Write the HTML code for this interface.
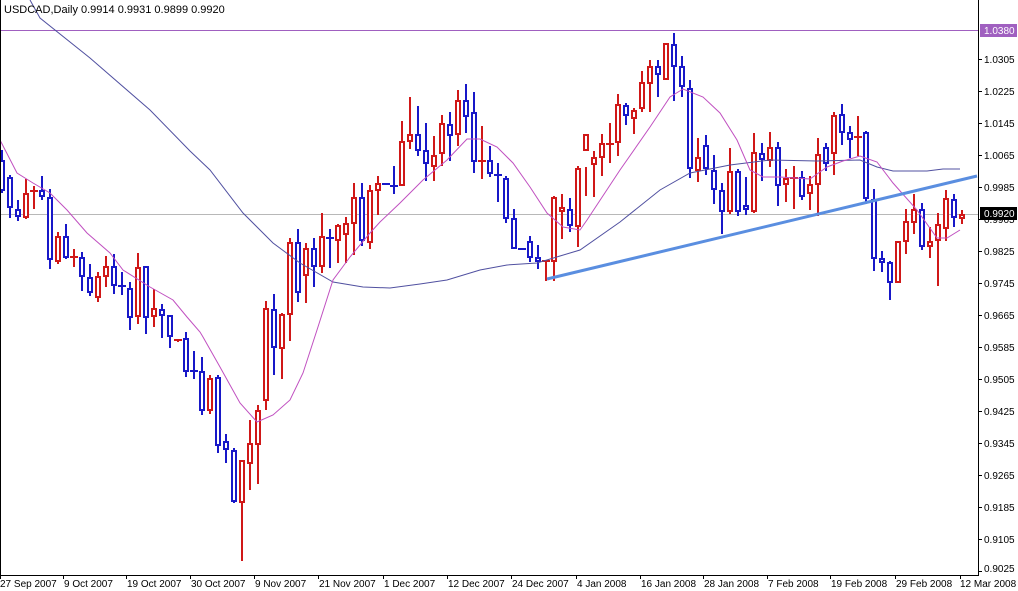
<!DOCTYPE html>
<html><head><meta charset="utf-8"><style>
html,body{margin:0;padding:0;background:#fff;width:1018px;height:591px;overflow:hidden}
svg{display:block}
text{font-family:"Liberation Sans",sans-serif;font-size:10px;fill:#000}
</style></head><body>
<svg id="s" width="1018" height="591" viewBox="0 0 1018 591" shape-rendering="crispEdges">
<rect width="1018" height="591" fill="#fff"/>
<line x1="0" y1="214.5" x2="978" y2="214.5" stroke="#b8b8b8"/>
<line x1="0" y1="30.5" x2="978" y2="30.5" stroke="#a060c0"/>
<g id="c"></g>
<polyline fill="none" stroke="#5050a0" stroke-width="1" shape-rendering="auto" points="30,0 40,18 90,58 150,110 190,151 210,170 243,213 273,243 300,263 333,282 363,287 390,288 420,284 447,280 480,270 507,265 537,263 560,256 580,250 620,222 660,190 690,173 730,165 770,160 817,161 860,160 877,167 893,171 927,171 943,169 960,169"/>
<polyline fill="none" stroke="#c050c0" stroke-width="1" shape-rendering="auto" points="0,140 17,173 33,183 50,193 67,210 87,233 110,253 123,270 150,287 173,300 187,317 200,332 203,337 220,367 240,403 257,422 273,415 290,400 303,373 317,330 333,280 350,257 370,233 380,222 400,203 423,180 447,160 467,139 480,139 497,147 513,163 530,187 547,213 563,227 580,230 587,220 620,170 650,127 670,97 683,89 703,97 720,113 737,140 750,170 763,177 780,177 810,179 827,167 843,161 860,156 877,162 893,183 917,210 937,238 947,238 960,230"/>
<line x1="547" y1="279" x2="977" y2="176" stroke="#5a8ee0" stroke-width="3" shape-rendering="auto"/>
<line x1="0.5" y1="0" x2="0.5" y2="575" stroke="#000"/>
<line x1="978.5" y1="0" x2="978.5" y2="575" stroke="#000"/>
<line x1="0" y1="575.5" x2="979" y2="575.5" stroke="#000"/>
<g id="ax"></g>
<text x="4" y="13" style="font-size:11px">USDCAD,Daily  0.9914 0.9931 0.9899 0.9920</text>
<rect x="980" y="24" width="37" height="13" fill="#a060c0"/>
<text x="984" y="34" style="fill:#fff">1.0380</text>
<text x="984" y="63">1.0305</text><text x="984" y="95">1.0225</text><text x="984" y="127">1.0145</text>
<text x="984" y="159">1.0065</text><text x="984" y="191">0.9985</text><text x="984" y="223">0.9905</text>
<text x="984" y="255">0.9825</text><text x="984" y="287">0.9745</text><text x="984" y="319">0.9665</text>
<text x="984" y="351">0.9585</text><text x="984" y="383">0.9505</text><text x="984" y="415">0.9425</text>
<text x="984" y="447">0.9345</text><text x="984" y="479">0.9265</text><text x="984" y="511">0.9185</text>
<text x="984" y="543">0.9105</text><text x="984" y="572">0.9025</text>
<rect x="980" y="207" width="37" height="13" fill="#000"/>
<text x="984" y="217" style="fill:#fff">0.9920</text>
<text x="0" y="587">27 Sep 2007</text><text x="64" y="587">9 Oct 2007</text><text x="127" y="587">19 Oct 2007</text>
<text x="191" y="587">30 Oct 2007</text><text x="255" y="587">9 Nov 2007</text><text x="319" y="587">21 Nov 2007</text>
<text x="384" y="587">1 Dec 2007</text><text x="448" y="587">12 Dec 2007</text><text x="512" y="587">24 Dec 2007</text>
<text x="577" y="587">4 Jan 2008</text><text x="641" y="587">16 Jan 2008</text><text x="704" y="587">28 Jan 2008</text>
<text x="768" y="587">7 Feb 2008</text><text x="831" y="587">19 Feb 2008</text><text x="896" y="587">29 Feb 2008</text>
<text x="960" y="587">12 Mar 2008</text>
</svg>
<script>
var d=[[150,160,190,192,'b'],[175,177,207,217,'b'],[200,209,216,220,'b'],[179,217,193,218,'r'],[186,193,190,208,'r'],[176,190,196,199,'b'],[189,197,259,268,'b'],[232,261,236,263,'r'],[224,236,257,258,'b'],[249,257,256,266,'r'],[252,257,276,290,'b'],[264,277,292,295,'b'],[272,297,276,301,'r'],[256,276,266,286,'r'],[254,266,285,293,'b'],[272,285,288,294,'b'],[282,288,317,329,'b'],[253,316,267,323,'r'],[266,266,317,333,'b'],[289,316,308,326,'r'],[304,309,315,337,'b'],[315,315,336,347,'b'],[339,341,339,341,'r'],[332,338,371,376,'b'],[351,370,371,378,'b'],[357,371,410,414,'b'],[375,410,378,413,'r'],[375,377,445,452,'b'],[434,441,449,462,'b'],[448,450,501,502,'b'],[460,502,460,560,'r'],[420,463,443,489,'r'],[405,444,410,483,'r'],[301,400,308,409,'r'],[294,309,347,374,'b'],[313,348,314,378,'r'],[238,314,242,340,'r'],[229,242,292,301,'b'],[243,275,248,302,'r'],[238,248,266,286,'b'],[213,266,236,272,'r'],[229,237,240,267,'b'],[224,240,225,262,'r'],[217,234,223,262,'r'],[183,223,197,254,'r'],[183,197,240,245,'b'],[185,242,190,248,'r'],[176,190,183,214,'r'],[183,183,183,183,'b'],[166,185,187,193,'b'],[121,185,141,185,'r'],[97,141,134,148,'r'],[106,134,150,155,'b'],[123,150,163,180,'b'],[136,166,155,180,'r'],[115,153,123,165,'r'],[112,124,135,160,'b'],[90,134,100,145,'r'],[84,100,116,132,'b'],[92,112,161,172,'b'],[126,161,160,178,'r'],[146,160,173,176,'b'],[163,174,177,201,'b'],[176,178,218,222,'b'],[209,218,248,248,'b'],[248,248,248,248,'b'],[236,241,257,261,'b'],[245,257,261,268,'b'],[260,262,260,280,'r'],[196,261,197,280,'r'],[194,211,207,238,'r'],[198,209,225,231,'b'],[166,226,168,246,'r'],[167,150,134,195,'r'],[151,164,157,196,'r'],[134,157,143,175,'r'],[123,143,143,162,'r'],[94,142,104,155,'r'],[103,105,115,124,'b'],[108,118,110,133,'r'],[71,108,82,111,'r'],[60,83,66,111,'r'],[60,66,74,96,'b'],[43,79,43,79,'r'],[33,44,66,100,'b'],[56,66,86,96,'b'],[80,88,168,177,'b'],[138,170,157,181,'r'],[135,145,168,174,'b'],[155,170,189,203,'b'],[183,190,211,233,'b'],[148,211,171,213,'r'],[169,171,211,215,'b'],[177,205,209,214,'b'],[133,211,152,212,'r'],[143,153,159,180,'b'],[132,160,147,166,'r'],[142,147,185,205,'b'],[169,184,178,201,'r'],[166,177,177,208,'r'],[171,177,196,199,'b'],[176,193,184,209,'r'],[138,184,154,215,'r'],[143,147,163,170,'b'],[112,153,115,174,'r'],[104,114,132,144,'b'],[126,132,139,157,'b'],[116,139,136,155,'r'],[131,132,198,203,'b'],[189,199,258,270,'b'],[251,258,262,271,'b'],[261,262,282,299,'b'],[241,282,241,282,'r'],[209,241,221,253,'r'],[194,222,209,233,'r'],[203,209,246,249,'b'],[227,246,241,257,'r'],[213,240,224,285,'r'],[190,228,198,240,'r'],[194,199,217,226,'b'],[210,218,214,223,'r']];
var h='';
d.forEach(function(c,i){var x=1+8*i,col=c[4]=='r'?'#d01818':'#1818c8';var t=Math.min(c[1],c[2]),b=Math.max(c[1],c[2]);
h+='<rect x="'+x+'" y="'+c[0]+'" width="2" height="'+(c[3]-c[0]+1)+'" fill="'+col+'"/>';
if(b-t<4){h+='<rect x="'+(x-3)+'" y="'+t+'" width="8" height="2" fill="'+col+'"/>';}
else{h+='<rect x="'+(x-2)+'" y="'+t+'" width="6" height="'+(b-t+1)+'" fill="'+col+'"/>';
h+='<rect x="'+x+'" y="'+(t+2)+'" width="2" height="'+(b-t-3)+'" fill="#fff"/>';}});
document.getElementById('c').innerHTML=h;
var a='';for(var k=0;k<17;k++){var y=59+32*k;a+='<line x1="978" y1="'+(y+.5)+'" x2="982" y2="'+(y+.5)+'" stroke="#000"/>';}
[0,63,126,190,254,318,383,447,511,576,640,703,767,830,895,960].forEach(function(x){a+='<line x1="'+(x+.5)+'" y1="575" x2="'+(x+.5)+'" y2="579" stroke="#000"/>';});
document.getElementById('ax').innerHTML=a;
</script>
</body></html>
